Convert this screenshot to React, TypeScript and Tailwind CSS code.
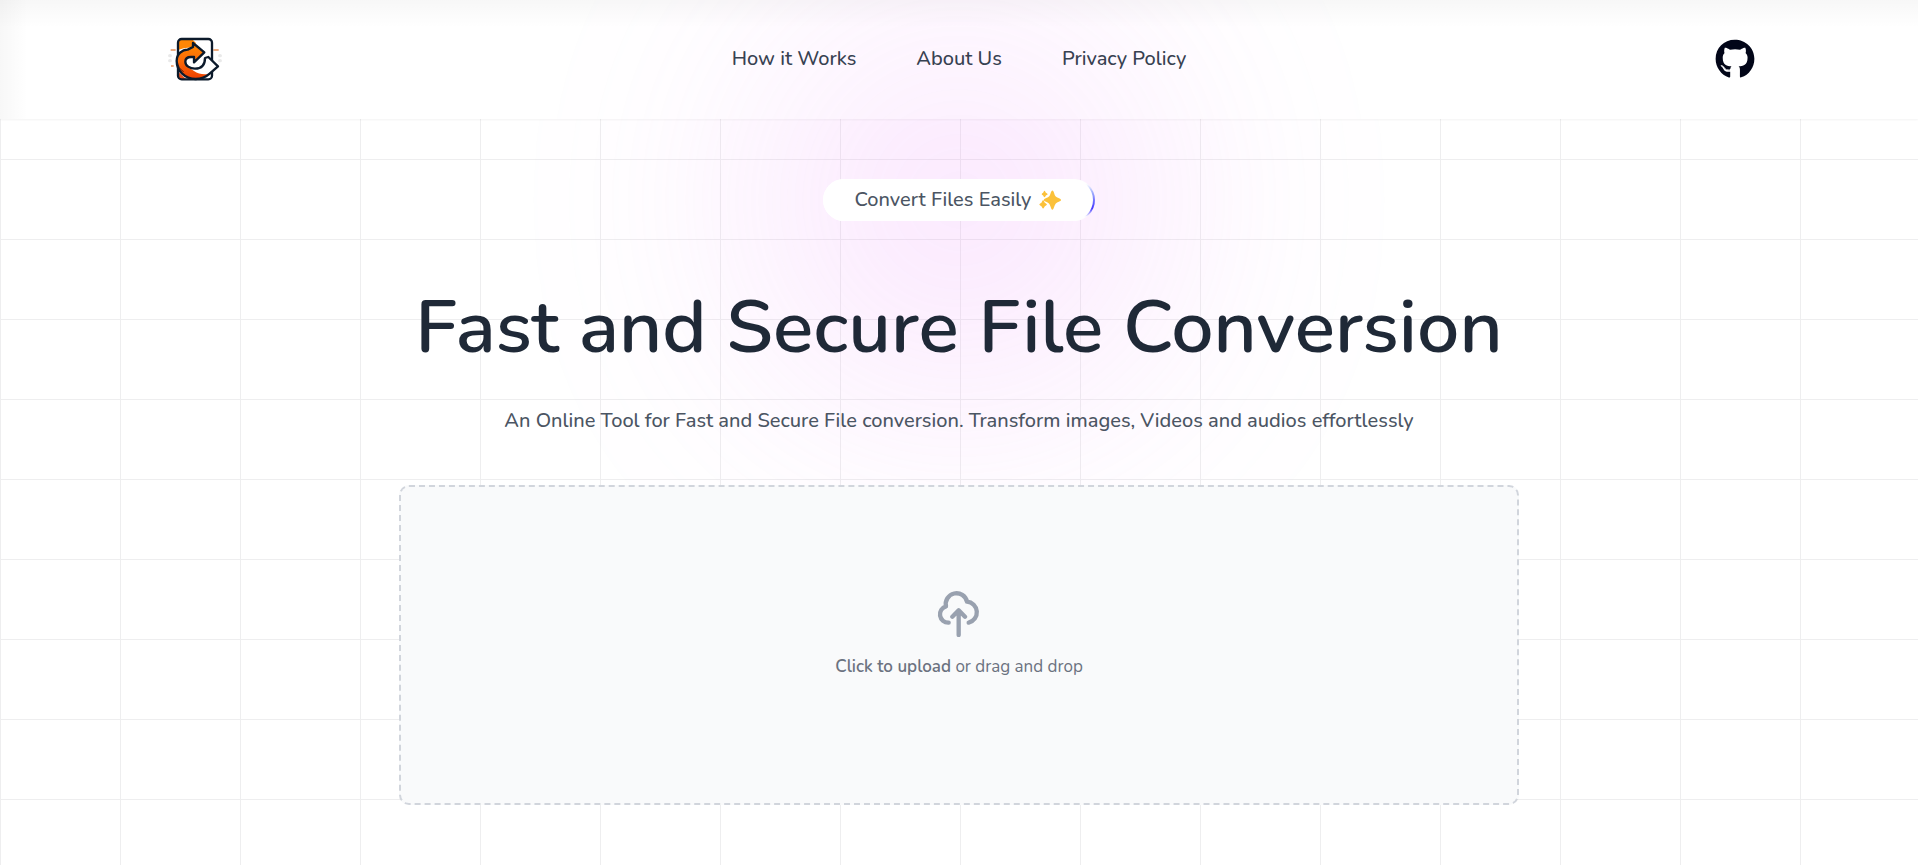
import { FaGithub } from "react-icons/fa";

const links = [
  { label: "How it Works", href: "#how" },
  { label: "About Us", href: "#about" },
  { label: "Privacy Policy", href: "#privacy" },
];

function Logo() {
  return (
    <svg viewBox="51 48 168 144" className="h-12 w-14" aria-hidden="true">
      <defs>
        <linearGradient id="flame" x1="0" y1="0" x2="0" y2="1">
          <stop offset="0" stopColor="#ff8a00" />
          <stop offset="0.5" stopColor="#fb6a08" />
          <stop offset="1" stopColor="#ee3f00" />
        </linearGradient>
      </defs>
      <path d="M62 93h15M190 93h16M63 141h8" stroke="#e8915a" strokeWidth="4" />
      <g fill="#e9e9e9">
        <ellipse cx="60" cy="110" rx="6" ry="5" />
        <ellipse cx="60" cy="125" rx="6" ry="5" />
        <ellipse cx="210" cy="110" rx="6" ry="5" />
        <ellipse cx="210" cy="125" rx="6" ry="5" />
      </g>
      <rect x="84" y="60" width="102" height="121" rx="11" fill="#fff" />
      <path d="M86 92V72q0-10 10-10h32l10 10-7 12-30 4z" fill="#ff8606" />
      <path d="M86 160l22 20H95q-9 0-9-9z" fill="#e8501c" />
      <rect x="84" y="60" width="102" height="121" rx="11" fill="none" stroke="#0c1a2b" strokeWidth="7" />
      <path
        d="M129 84V72l34 28-31 30v-16h-9c-10 0-17 5-17 14 0 12 13 21 29 21 19 0 30-10 30-32l10-3 29 28-25 22c-11 10-25 16-42 16-32 0-57-25-57-54 0-21 17-34 33-34z"
        fill="url(#flame)"
      />
      <path d="M135 149c19 0 30-10 30-32l10-3 29 28-26 22c-14 4-32 2-46-8-6-4-12-6-16-8 5 1 12 1 19 1z" fill="#fff" />
      <path d="M82 128c2 14 8 24 19 30" fill="none" stroke="#5b1a0a" strokeWidth="3" />
      <path
        d="M129 84V72l34 28-31 30v-16h-9c-10 0-17 5-17 14 0 12 13 21 29 21 19 0 30-10 30-32l10-3 29 28-25 22c-11 10-25 16-42 16-32 0-57-25-57-54 0-21 17-34 33-34z"
        fill="none"
        stroke="#0c1a2b"
        strokeWidth="7"
        strokeLinejoin="round"
      />
    </svg>
  );
}

function Sparkles() {
  return (
    <svg viewBox="724 86 64 64" className="size-[22px]" fill="#fbc13a" aria-hidden="true">
      <path d="M763 90c4 0 6 14 10 18s15 6 15 10-11 6-15 10-6 18-10 18-6-14-10-18-15-6-15-10 11-6 15-10 6-18 10-18z" />
      <path d="M740 91c2 0 3 5 4 6s5 2 5 4-4 3-5 4-2 5-4 5-3-4-4-5-4-2-4-4 3-3 4-4 2-6 4-6z" />
      <path d="M736 118c2 0 4 7 5 8s6 3 6 5-5 4-6 5-3 7-5 7-4-6-5-7-6-3-6-5 5-4 6-5 3-8 5-8z" />
    </svg>
  );
}

function UploadIcon() {
  return (
    <svg
      viewBox="0 0 144 144"
      className="mb-4 size-12 text-gray-400"
      fill="none"
      stroke="currentColor"
      strokeWidth="13"
      strokeLinecap="round"
      strokeLinejoin="round"
      aria-hidden="true"
    >
      <path d="M41 101A25 25 0 0 1 33 52A32 32 0 0 1 96 38A32 32 0 0 1 101 101" />
      <path d="M71 138V64M52 83l19-19 19 19" />
    </svg>
  );
}

export default function App() {
  return (
    <div className="relative isolate min-h-screen overflow-hidden bg-white bg-[linear-gradient(to_right,#eeeeef_1px,transparent_1px),linear-gradient(to_bottom,#eeeeef_1px,transparent_1px)] bg-[size:120px_80px] bg-[position:0_79px] font-['Nunito','Lato',sans-serif] text-slate-800">
      <div className="absolute inset-x-0 top-0 -z-10 mx-auto size-[400px] rounded-full bg-[#e879f9] opacity-20 blur-[130px]" />
      <header className="relative bg-white shadow-xs">
        <div className="absolute inset-0 overflow-hidden">
          <div className="absolute inset-x-0 top-0 mx-auto size-[400px] rounded-full bg-[#e879f9] opacity-15 blur-[130px]" />
          <div className="absolute inset-x-0 top-0 h-7 bg-linear-to-b from-black/3 to-transparent" />
          <div className="absolute inset-y-0 left-0 w-7 bg-linear-to-r from-black/3 to-transparent" />
        </div>
        <div className="relative mx-auto grid h-[119px] max-w-[1600px] grid-cols-[1fr_auto_1fr] items-center px-1 pb-0.5">
          <a href="#home" aria-label="Home" className="ml-1 justify-self-start">
            <Logo />
          </a>
          <nav className="flex gap-15 text-xl font-medium text-[#374151]">
            {links.map((l) => (
              <a key={l.href} href={l.href}>
                {l.label}
              </a>
            ))}
          </nav>
          <a href="#github" aria-label="GitHub" className="justify-self-end text-slate-950">
            <FaGithub className="size-10" />
          </a>
        </div>
      </header>

      <main className="mx-auto flex max-w-[1120px] flex-col items-center pt-15">
        <div className="rounded-full bg-[linear-gradient(to_right,white_92%,transparent_92%),linear-gradient(to_bottom,white_12%,#a5b4fc_30%,#4338ff_70%,white_90%)] pr-0.5">
          <p className="flex h-[42px] items-center gap-2 rounded-full bg-white px-8 text-xl font-medium text-[#4b5563]">
            Convert Files Easily
            <Sparkles />
          </p>
        </div>
        <h1 className="mt-16 text-center text-[75px] leading-[84px] font-semibold text-[#1f2937]">
          Fast and Secure File Conversion
        </h1>
        <p className="mt-9 text-center text-xl leading-8 font-medium text-[#4b5563]">
          An Online Tool for Fast and Secure File conversion. Transform images, Videos and audios effortlessly
        </p>
        <label
          htmlFor="file"
          className="mt-12 flex h-80 w-full cursor-pointer flex-col items-center justify-center rounded-[10px] border-2 border-dashed border-gray-300 bg-gray-50 pb-5 text-[#6b7280]"
        >
          <UploadIcon />
          <span className="text-[17px] leading-7">
            <span className="font-semibold">Click to upload</span> or drag and drop
          </span>
          <input id="file" type="file" className="sr-only" />
        </label>
      </main>
    </div>
  );
}
